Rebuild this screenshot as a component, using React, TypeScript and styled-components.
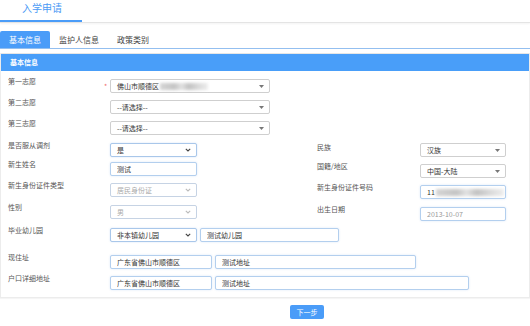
import React from 'react'
import styled, { createGlobalStyle } from 'styled-components'

const GlobalStyle = createGlobalStyle`
  html, body { margin: 0; padding: 0; background: #fff; }
  body {
    width: 530px;
    height: 326px;
    overflow: hidden;
    font-family: "Noto Sans CJK SC", "Noto Sans", sans-serif;
    color: #333;
  }
`

const TitleBar = styled.div`
  height: 22px;
  border-bottom: 1px solid #e4e4e4;
  box-shadow: 0 1px 2px rgba(0, 0, 0, 0.05);
`
const Title = styled.div`
  width: 82px;
  height: 22px;
  box-sizing: border-box;
  border-bottom: 2px solid #4a9cf8;
  color: #4a9af5;
  font-size: 10px;
  line-height: 16px;
  text-align: center;
  padding-left: 2px;
`

const Tabs = styled.div`
  display: flex;
  margin-top: 8px;
  height: 17px;
  border-bottom: 1px solid #93bff0;
`
const Tab = styled.div<{ $active?: boolean }>`
  padding: 0 9px;
  font-size: 8px;
  line-height: 17px;
  border-radius: 2px 2px 0 0;
  background: ${({ $active }) => ($active ? '#4a9cf8' : 'transparent')};
  color: ${({ $active }) => ($active ? '#fff' : '#444')};
`

const Panel = styled.div`
  margin-top: 4px;
  border: 1px solid #ececec;
  border-top: none;
  height: 245px;
  box-sizing: border-box;
  box-shadow: 0 1px 1px rgba(0, 0, 0, 0.04);
`
const PanelHead = styled.div`
  height: 17px;
  background: #499ef9;
  border-top: 1px solid #e6e6e6;
  color: #fff;
  font-size: 7px;
  font-weight: 700;
  line-height: 16px;
  padding-left: 9px;
`
const FormBody = styled.div`
  padding: 8px 0 8px 7px;
`

const Row = styled.div<{ $top?: number }>`
  display: grid;
  grid-template-columns: 96px 6px 207px 103px 86px;
  align-items: start;
  height: 14px;
  margin-top: ${({ $top }) => $top ?? 0}px;
`
const Label = styled.div`
  font-size: 7px;
  line-height: 8px;
  margin-top: -2px;
  color: #555;
  white-space: nowrap;
`
const RightLabel = styled(Label)`
  margin-top: 0;
`
const Mark = styled.div`
  color: #f06b6b;
  font-size: 7px;
  line-height: 14px;
`
const Cell = styled.div<{ $shift?: number }>`
  display: flex;
  gap: 3px;
  margin-top: ${({ $shift }) => $shift ?? 0}px;
`
const Wide = styled(Cell)`
  grid-column: 3 / -1;
`

type Variant = 'plain' | 'focus' | 'disabled'

const borderOf = (v: Variant) => (v === 'plain' ? '#cfcfcf' : v === 'focus' ? '#a9c7ea' : '#c6d3e4')

const SelectBox = styled.div<{ $w: number; $v: Variant }>`
  width: ${({ $w }) => $w}px;
  height: 14px;
  box-sizing: border-box;
  border: 1px solid ${({ $v }) => borderOf($v)};
  border-radius: 2px;
  display: flex;
  align-items: center;
  justify-content: space-between;
  padding: 0 5px 0 6px;
  font-size: 7px;
  color: ${({ $v }) => ($v === 'disabled' ? '#aaa' : '#333')};
  background: #fff;
  box-shadow: ${({ $v }) => ($v === 'focus' ? '0 0 2px rgba(120,170,230,0.35)' : 'none')};
`
const InputBox = styled.input<{ $w: number; $muted?: boolean }>`
  width: ${({ $w }) => $w}px;
  height: 14px;
  box-sizing: border-box;
  border: 1px solid #b3cfee;
  border-radius: 2px;
  padding: 0 0 0 6px;
  margin: 0;
  font-family: inherit;
  font-size: 7px;
  color: ${({ $muted }) => ($muted ? '#999' : '#333')};
  background: #fff;
  outline: none;
  box-shadow: 0 0 2px rgba(120, 170, 230, 0.3);
`
const FakeInput = styled.div<{ $w: number }>`
  width: ${({ $w }) => $w}px;
  height: 14px;
  box-sizing: border-box;
  border: 1px solid #b3cfee;
  border-radius: 2px;
  padding-left: 6px;
  display: flex;
  align-items: center;
  font-size: 7px;
  overflow: hidden;
  box-shadow: 0 0 2px rgba(120, 170, 230, 0.3);
`
const Blur = styled.span<{ $w: number }>`
  display: inline-block;
  width: ${({ $w }) => $w}px;
  height: 7px;
  margin-left: 1px;
  background: linear-gradient(90deg, #d5d5d5, #c4c4c4 30%, #e2e2e2 45%, #c2c2c2 60%, #dadada 80%, #ededed);
  filter: blur(1.5px);
`
const SelectText = styled.span`
  display: flex;
  align-items: center;
`

const Caret: React.FC<{ $v: Variant }> = ({ $v }) =>
  $v === 'plain' ? (
    <svg width="5" height="3" viewBox="0 0 5 3">
      <path d="M0 0h5L2.5 3z" fill="#777" />
    </svg>
  ) : (
    <svg width="6" height="4" viewBox="0 0 6 4">
      <path d="M0.8 0.8L3 3L5.2 0.8" fill="none" stroke={$v === 'disabled' ? '#bbb' : '#444'} strokeWidth="1.1" />
    </svg>
  )

const Select: React.FC<{ w: number; v?: Variant; children: React.ReactNode }> = ({ w, v = 'plain', children }) => (
  <SelectBox $w={w} $v={v}>
    <SelectText>{children}</SelectText>
    <Caret $v={v} />
  </SelectBox>
)

const Footer = styled.div`
  display: flex;
  padding: 7px 0 0 290px;
`
const NextButton = styled.button`
  width: 34px;
  height: 14px;
  border: none;
  border-radius: 2px;
  background: #4a9cf8;
  color: #fff;
  font-family: inherit;
  font-size: 7px;
  padding: 0;
  line-height: 14px;
`

export default function App() {
  return (
    <>
      <GlobalStyle />
      <TitleBar>
        <Title>入学申请</Title>
      </TitleBar>
      <Tabs>
        <Tab $active>基本信息</Tab>
        <Tab>监护人信息</Tab>
        <Tab>政策类别</Tab>
      </Tabs>
      <Panel>
        <PanelHead>基本信息</PanelHead>
        <FormBody>
          <Row>
            <Label>第一志愿</Label>
            <Mark>*</Mark>
            <Wide>
              <Select w={160}>
                佛山市顺德区<Blur $w={48} />
              </Select>
            </Wide>
          </Row>
          <Row $top={7}>
            <Label>第二志愿</Label>
            <span />
            <Wide>
              <Select w={160}>--请选择--</Select>
            </Wide>
          </Row>
          <Row $top={7}>
            <Label>第三志愿</Label>
            <span />
            <Wide>
              <Select w={160}>--请选择--</Select>
            </Wide>
          </Row>
          <Row $top={8}>
            <Label>是否服从调剂</Label>
            <span />
            <Cell>
              <Select w={87} v="focus">是</Select>
            </Cell>
            <RightLabel>民族</RightLabel>
            <Cell>
              <Select w={86}>汉族</Select>
            </Cell>
          </Row>
          <Row $top={5}>
            <Label>新生姓名</Label>
            <span />
            <Cell>
              <InputBox $w={87} value="测试" readOnly />
            </Cell>
            <RightLabel>国籍/地区</RightLabel>
            <Cell $shift={2}>
              <Select w={86}>中国-大陆</Select>
            </Cell>
          </Row>
          <Row $top={7}>
            <Label>新生身份证件类型</Label>
            <span />
            <Cell>
              <Select w={87} v="disabled">居民身份证</Select>
            </Cell>
            <RightLabel>新生身份证件号码</RightLabel>
            <Cell $shift={2}>
              <FakeInput $w={86}>
                11<Blur $w={68} />
              </FakeInput>
            </Cell>
          </Row>
          <Row $top={8}>
            <Label>性别</Label>
            <span />
            <Cell>
              <Select w={87} v="disabled">男</Select>
            </Cell>
            <RightLabel>出生日期</RightLabel>
            <Cell $shift={2}>
              <InputBox $w={86} $muted value="2013-10-07" readOnly />
            </Cell>
          </Row>
          <Row $top={9}>
            <Label>毕业幼儿园</Label>
            <span />
            <Wide>
              <Select w={87} v="focus">非本镇幼儿园</Select>
              <InputBox $w={139} value="测试幼儿园" readOnly />
            </Wide>
          </Row>
          <Row $top={13}>
            <Label>现住址</Label>
            <span />
            <Wide>
              <InputBox $w={102} value="广东省佛山市顺德区" readOnly />
              <InputBox $w={201} value="测试地址" readOnly />
            </Wide>
          </Row>
          <Row $top={7}>
            <Label>户口详细地址</Label>
            <span />
            <Wide>
              <InputBox $w={102} value="广东省佛山市顺德区" readOnly />
              <InputBox $w={254} value="测试地址" readOnly />
            </Wide>
          </Row>
        </FormBody>
      </Panel>
      <Footer>
        <NextButton>下一步</NextButton>
      </Footer>
    </>
  )
}
